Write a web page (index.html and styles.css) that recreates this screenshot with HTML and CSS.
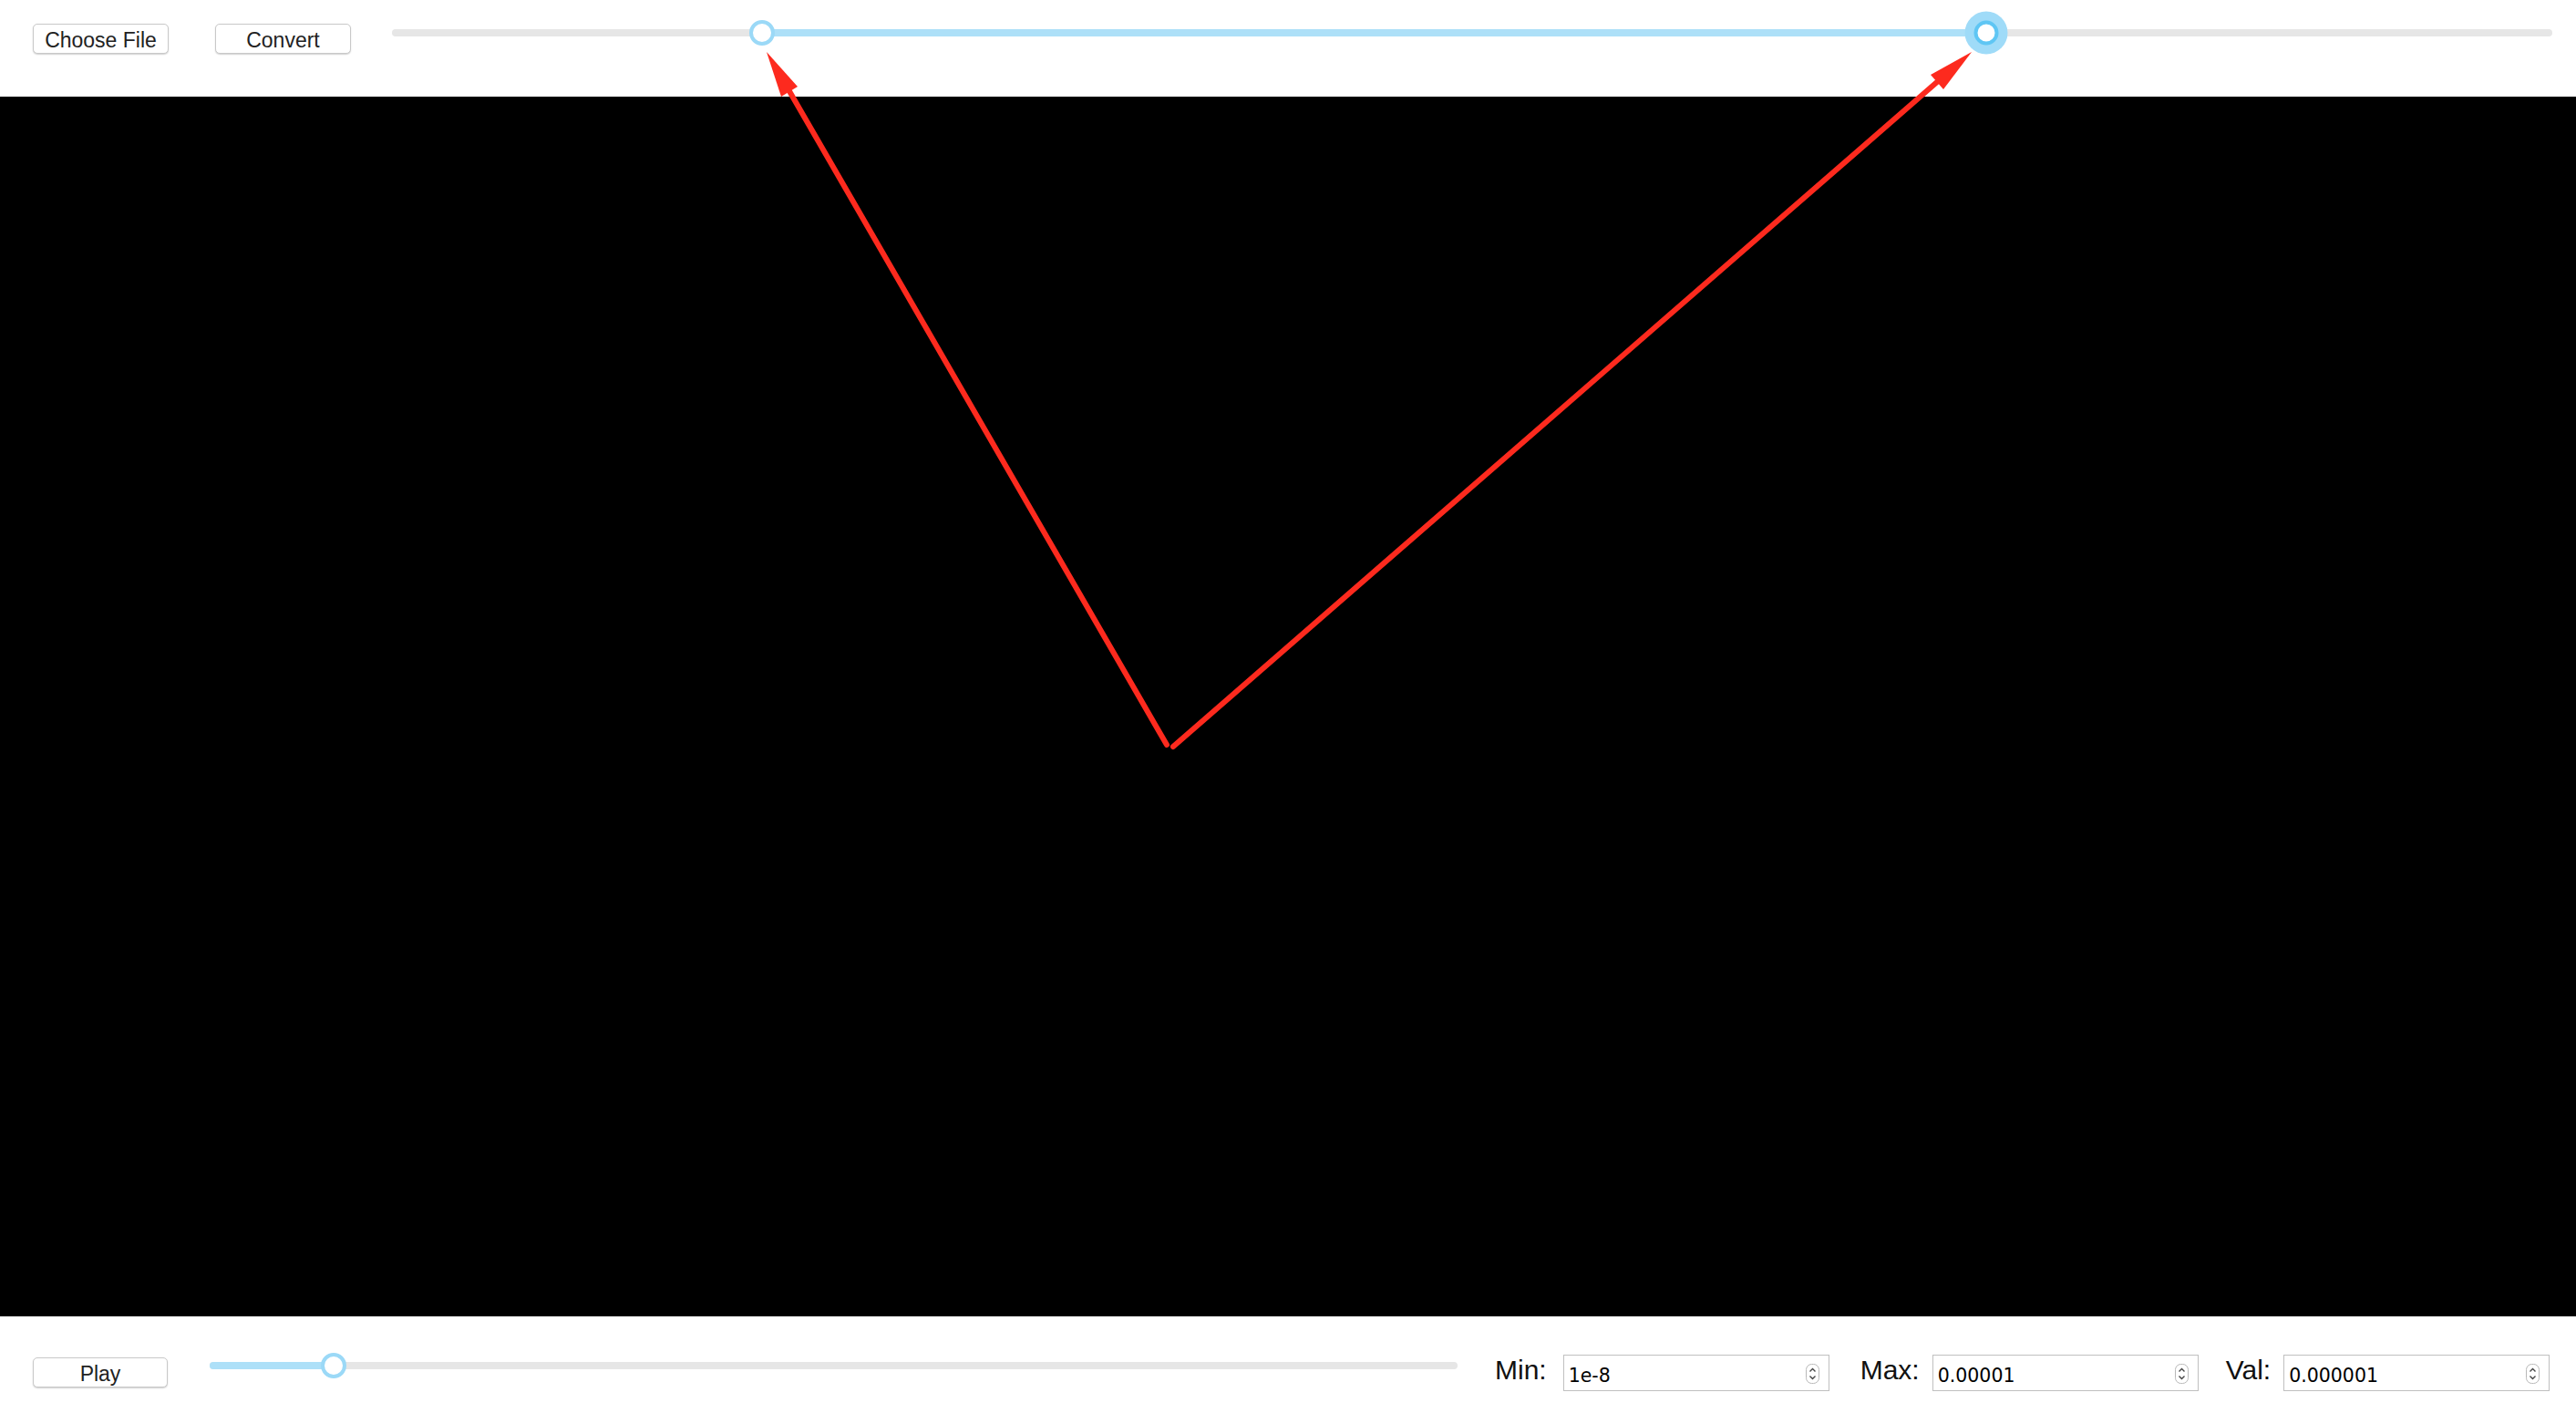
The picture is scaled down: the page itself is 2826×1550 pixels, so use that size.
FILE: index.html
```html
<!DOCTYPE html>
<html>
<head>
<meta charset="utf-8">
<title>Viewer</title>
<link rel="stylesheet" href="styles.css">
</head>
<body>
<div class="page">
  <div class="topbar">
    <button class="btn">Choose File</button>
    <button class="btn btn-gap">Convert</button>
    <div class="slider slider-top">
      <div class="track">
        <div class="fill" style="left:17.13%;width:56.67%"></div>
      </div>
      <div class="thumb" style="left:17.13%"></div>
      <div class="thumb thumb-focus" style="left:73.8%"></div>
    </div>
  </div>
  <div class="canvas"></div>
  <div class="bottombar">
    <button class="btn btn-play">Play</button>
    <div class="slider slider-bottom">
      <div class="track">
        <div class="fill" style="left:0;width:9.93%"></div>
      </div>
      <div class="thumb" style="left:9.93%"></div>
    </div>
    <div class="field field-min">
      <span class="label">Min:</span>
      <div class="numbox"><span class="numval">1e-8</span>
        <svg class="spin" width="15" height="22" viewBox="0 0 15 22"><rect x="0.5" y="0.5" width="14" height="21" rx="6" fill="#fff" stroke="#b8b8b8"/><path d="M4.5 8.5 L7.5 5.5 L10.5 8.5" fill="none" stroke="#444" stroke-width="1.4"/><path d="M4.5 13.5 L7.5 16.5 L10.5 13.5" fill="none" stroke="#444" stroke-width="1.4"/></svg>
      </div>
    </div>
    <div class="field field-max">
      <span class="label">Max:</span>
      <div class="numbox"><span class="numval">0.00001</span>
        <svg class="spin" width="15" height="22" viewBox="0 0 15 22"><rect x="0.5" y="0.5" width="14" height="21" rx="6" fill="#fff" stroke="#b8b8b8"/><path d="M4.5 8.5 L7.5 5.5 L10.5 8.5" fill="none" stroke="#444" stroke-width="1.4"/><path d="M4.5 13.5 L7.5 16.5 L10.5 13.5" fill="none" stroke="#444" stroke-width="1.4"/></svg>
      </div>
    </div>
    <div class="field field-val">
      <span class="label">Val:</span>
      <div class="numbox"><span class="numval">0.000001</span>
        <svg class="spin" width="15" height="22" viewBox="0 0 15 22"><rect x="0.5" y="0.5" width="14" height="21" rx="6" fill="#fff" stroke="#b8b8b8"/><path d="M4.5 8.5 L7.5 5.5 L10.5 8.5" fill="none" stroke="#444" stroke-width="1.4"/><path d="M4.5 13.5 L7.5 16.5 L10.5 13.5" fill="none" stroke="#444" stroke-width="1.4"/></svg>
      </div>
    </div>
  </div>
  <svg class="annotations" width="2826" height="1550" viewBox="0 0 2826 1550">
    <line x1="1280" y1="817" x2="866" y2="100" stroke="#fd2a1e" stroke-width="6" stroke-linecap="round"/>
    <polygon points="841,57 875,95 857,106" fill="#fd2a1e"/>
    <line x1="1287" y1="819" x2="2125" y2="90" stroke="#fd2a1e" stroke-width="6" stroke-linecap="round"/>
    <polygon points="2163,57 2132,98 2118,82" fill="#fd2a1e"/>
  </svg>
</div>
</body>
</html>
```

FILE: styles.css
```css
html, body {
  margin: 0;
  padding: 0;
  background: #fff;
}

.page {
  position: relative;
  width: 2826px;
  height: 1550px;
  overflow: hidden;
  font-family: "Liberation Sans", Arial, sans-serif;
}

.topbar {
  height: 106px;
  display: flex;
  align-items: flex-start;
  padding-left: 36px;
  box-sizing: border-box;
}

.btn {
  width: 149px;
  height: 33px;
  margin-top: 26px;
  padding: 4px 0 0 0;
  box-sizing: border-box;
  background: #fff;
  border: 1px solid #c9c9c9;
  border-radius: 5px;
  box-shadow: 0 1px 1.5px rgba(0, 0, 0, 0.18);
  font-family: "Liberation Sans", Arial, sans-serif;
  font-size: 23px;
  color: #222;
  line-height: 27px;
  text-align: center;
  flex: none;
}

.btn-gap {
  margin-left: 51px;
}

.btn-play {
  width: 148px;
  margin-top: 45px;
}

.slider {
  position: relative;
  height: 28px;
  display: flex;
  align-items: center;
}

.slider-top {
  flex: 1;
  margin-left: 45px;
  margin-right: 26px;
  margin-top: 22px;
}

.slider-bottom {
  flex: none;
  width: 1369px;
  margin-left: 46px;
  margin-top: 40px;
}

.track {
  position: relative;
  width: 100%;
  height: 8px;
  border-radius: 4px;
  background: #e6e6e6;
}

.fill {
  position: absolute;
  top: 0;
  height: 8px;
  border-radius: 4px;
  background: #ade0f8;
}

.thumb {
  position: absolute;
  top: 50%;
  width: 28px;
  height: 28px;
  box-sizing: border-box;
  border: 4.5px solid #9bd9f7;
  border-radius: 50%;
  background: #fff;
  transform: translate(-50%, -50%);
}

.thumb-focus {
  border: 4px solid #5fc6f4;
  width: 27px;
  height: 27px;
  box-shadow: 0 0 0 10px #9fdbf8;
}

.canvas {
  height: 1338px;
  background: #000;
}

.bottombar {
  height: 106px;
  display: flex;
  align-items: flex-start;
  padding-left: 36px;
  box-sizing: border-box;
}

.field {
  display: flex;
  align-items: flex-start;
  flex: none;
}

.field-min {
  margin-left: 41px;
}

.field-max {
  margin-left: 34px;
}

.field-val {
  margin-left: 30px;
}

.label {
  font-family: "Liberation Sans", Arial, sans-serif;
  font-size: 30px;
  line-height: 40px;
  margin-top: 39px;
  margin-right: 14px;
  color: #111;
}

.field-min .label {
  margin-right: 18px;
}

.numbox {
  width: 292px;
  height: 40px;
  margin-top: 42px;
  box-sizing: border-box;
  border: 1px solid #c0c0c0;
  background: #fff;
  display: flex;
  align-items: center;
  padding-left: 5px;
  padding-right: 10px;
}

.numval {
  flex: 1;
  font-family: "DejaVu Sans", sans-serif;
  font-size: 20.5px;
  color: #000;
  line-height: 38px;
  padding-top: 5px;
}

.spin {
  flex: none;
  display: block;
  margin-top: 1px;
}

.annotations {
  position: absolute;
  left: 0;
  top: 0;
  pointer-events: none;
}
```
